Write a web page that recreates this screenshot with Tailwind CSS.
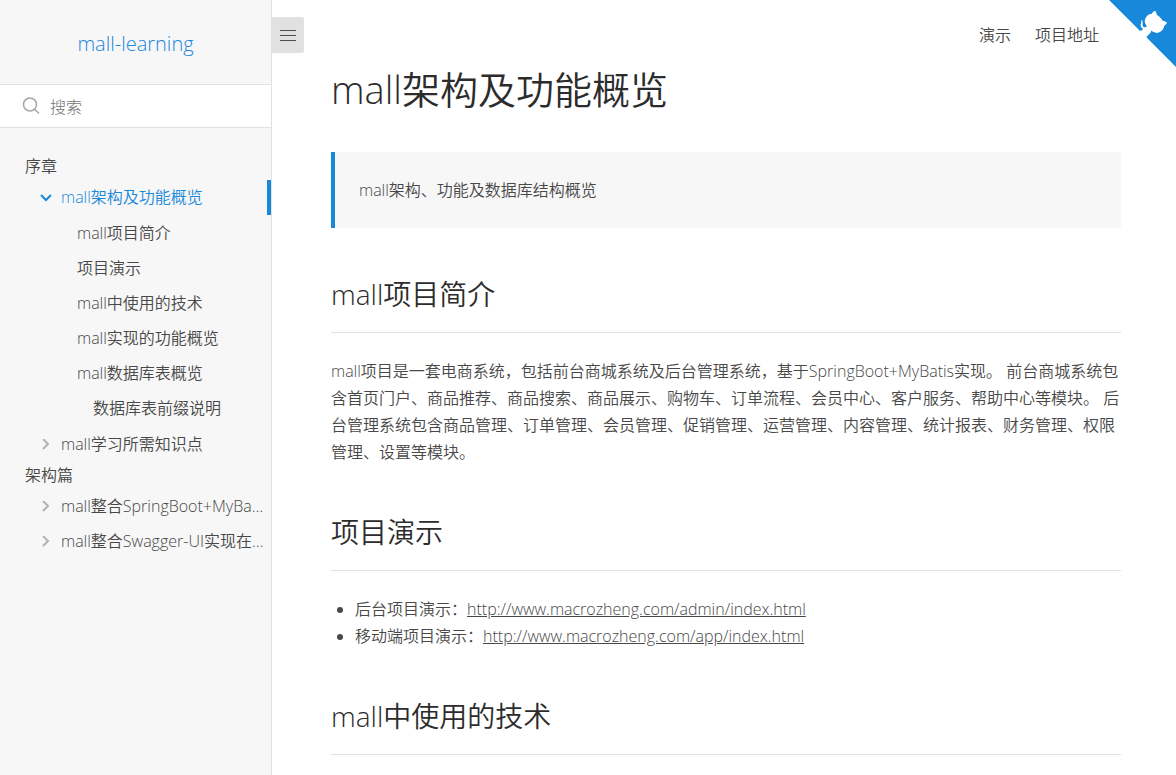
<!DOCTYPE html>
<html lang="zh-CN">
<head>
  <meta charset="UTF-8" />
  <meta name="viewport" content="width=device-width, initial-scale=1.0" />
  <title>mall架构及功能概览</title>
  <script src="https://cdn.jsdelivr.net/npm/@tailwindcss/browser@4"></script>
</head>
<body class="flex h-screen overflow-hidden bg-white font-['Open_Sans','Noto_Sans_CJK_SC',sans-serif] text-base leading-[27px] font-[350] text-[#484848]">

  <!-- Sidebar -->
  <aside class="w-[272px] shrink-0 overflow-hidden border-r border-[#e1e1e1] bg-[#f7f7f7]">
    <div class="flex h-[84px] items-center justify-center pt-1">
      <a href="#/" class="text-xl font-light text-[#1888db]">mall-learning</a>
    </div>

    <form class="flex h-11 items-center border-y border-[#e1e1e1] bg-white pl-[22px]">
      <label for="search" aria-label="搜索">
        <svg class="size-[18px]" viewBox="0 0 18 18" fill="none" stroke="#a6a6a6" stroke-width="1.5">
          <circle cx="8" cy="7.500" r="6.500" />
          <path d="M12.500 12l4.500 4.500" />
        </svg>
      </label>
      <input id="search" type="search" placeholder="搜索" class="ml-[10px] w-48 pt-0.5 font-light outline-none placeholder:text-[#757575]" />
    </form>

    <nav class="pt-[25px] pl-[25px]">
      <p>序章</p>
      <ul>
        <li>
          <div class="flex h-[35px] items-center border-r-4 border-[#1888db] pl-[15px] text-[#1888db]">
            <svg class="mr-[9px] size-3 shrink-0" viewBox="0 0 12 12" fill="none" stroke="currentColor" stroke-width="2"><path d="M1 3l5 5 5-5" /></svg>
            <a href="#/overview" class="truncate">mall架构及功能概览</a>
          </div>
          <ul class="py-px pl-[52px]">
            <li class="leading-[35px]"><a href="#/overview?id=intro">mall项目简介</a></li>
            <li class="leading-[35px]"><a href="#/overview?id=demo">项目演示</a></li>
            <li class="leading-[35px]"><a href="#/overview?id=tech">mall中使用的技术</a></li>
            <li class="leading-[35px]"><a href="#/overview?id=features">mall实现的功能概览</a></li>
            <li class="leading-[35px]">
              <a href="#/overview?id=tables">mall数据库表概览</a>
              <ul class="pl-4">
                <li><a href="#/overview?id=prefix">数据库表前缀说明</a></li>
              </ul>
            </li>
          </ul>
        </li>
        <li class="flex h-[35px] items-center pl-[15px]">
          <svg class="mr-[9px] size-3 shrink-0" viewBox="0 0 12 12" fill="none" stroke="#b3b3b3" stroke-width="2"><path d="M3 0l5 5-5 5" /></svg>
          <a href="#/reference" class="truncate">mall学习所需知识点</a>
        </li>
      </ul>
      <p>架构篇</p>
      <ul class="pr-1">
        <li class="flex h-[35px] items-center pl-[15px]">
          <svg class="mr-[9px] size-3 shrink-0" viewBox="0 0 12 12" fill="none" stroke="#b3b3b3" stroke-width="2"><path d="M3 0l5 5-5 5" /></svg>
          <a href="#/arch-01" class="truncate">mall整合SpringBoot+MyBatis搭建基本骨架</a>
        </li>
        <li class="flex h-[35px] items-center pl-[15px]">
          <svg class="mr-[9px] size-3 shrink-0" viewBox="0 0 12 12" fill="none" stroke="#b3b3b3" stroke-width="2"><path d="M3 0l5 5-5 5" /></svg>
          <a href="#/arch-02" class="truncate">mall整合Swagger-UI实现在线API文档</a>
        </li>
      </ul>
    </nav>
  </aside>

  <!-- Content -->
  <main class="relative min-w-0 flex-1 overflow-hidden">
    <button type="button" aria-label="Menu" class="absolute top-[17px] left-0 flex h-9 w-8 flex-col items-center justify-center gap-1 rounded-r-xs bg-[#e1e1e1]">
      <span class="h-px w-4 bg-[#4d4d4d]"></span>
      <span class="h-px w-4 bg-[#4d4d4d]"></span>
      <span class="h-px w-4 bg-[#4d4d4d]"></span>
    </button>

    <a href="https://github.com/macrozheng/mall" aria-label="View source on Github" class="absolute top-0 right-0">
      <svg class="size-[67px]" viewBox="0 0 250 250" fill="#1888db">
        <path d="M0,0 L115,115 L130,115 L142,142 L250,250 L250,0 Z" />
        <path fill="#fff" d="M128.3,109.0 C113.8,99.7 119.0,89.6 119.0,89.6 C122.0,82.7 120.5,78.6 120.5,78.6 C119.2,72.0 123.4,76.3 123.4,76.3 C127.3,80.9 125.5,87.3 125.5,87.3 C122.9,97.6 130.6,101.9 134.4,103.2" />
        <path fill="#fff" d="M115.0,115.0 C114.9,115.1 118.7,116.5 119.8,115.4 L133.7,101.6 C136.9,99.2 139.9,98.4 142.2,98.6 C133.8,88.0 127.5,74.4 143.8,58.0 C148.5,53.4 154.0,51.2 159.7,51.0 C160.3,49.4 163.2,43.6 171.4,40.1 C171.4,40.1 176.1,42.5 178.8,56.2 C183.1,58.6 187.2,61.8 190.9,65.4 C194.5,69.0 197.7,73.2 200.1,77.6 C213.8,80.2 216.3,84.9 216.3,84.9 C212.7,93.1 206.9,96.0 205.4,96.6 C205.1,102.4 203.0,107.8 198.3,112.5 C181.9,128.9 168.3,122.5 157.7,114.1 C157.9,116.9 156.7,120.9 152.7,124.9 L141.0,136.5 C139.8,137.7 141.6,141.9 141.8,141.8 Z" />
      </svg>
    </a>

    <nav class="flex justify-end gap-6 pt-[22px] pr-[77px] pb-4">
      <a href="#demo">演示</a>
      <a href="#source">项目地址</a>
    </nav>

    <article class="pr-[55px] pl-[59px]">
      <h1 class="mb-[39px] text-[38px] leading-[48px] text-[#2c2c2c]">mall架构及功能概览</h1>

      <blockquote class="border-l-4 border-[#1888db] bg-[#f7f7f7] px-6 pt-[25px] pb-6">
        <p>mall架构、功能及数据库结构概览</p>
      </blockquote>

      <h2 class="mt-11 mb-[25px] border-b border-[#e1e1e1] pb-4 text-[28px] leading-[44px] text-[#2c2c2c]">mall项目简介</h2>
      <p>mall项目是一套电商系统，包括前台商城系统及后台管理系统，基于SpringBoot+MyBatis实现。 前台商城系统包含首页门户、商品推荐、商品搜索、商品展示、购物车、订单流程、会员中心、客户服务、帮助中心等模块。 后台管理系统包含商品管理、订单管理、会员管理、促销管理、运营管理、内容管理、统计报表、财务管理、权限管理、设置等模块。</p>

      <h2 class="mt-11 mb-[25px] border-b border-[#e1e1e1] pb-4 text-[28px] leading-[44px] text-[#2c2c2c]">项目演示</h2>
      <ul class="list-disc pl-6">
        <li>后台项目演示：<a href="http://www.macrozheng.com/admin/index.html" class="underline">http://www.macrozheng.com/admin/index.html</a></li>
        <li>移动端项目演示：<a href="http://www.macrozheng.com/app/index.html" class="underline">http://www.macrozheng.com/app/index.html</a></li>
      </ul>

      <h2 class="mt-11 mb-[25px] border-b border-[#e1e1e1] pb-4 text-[28px] leading-[44px] text-[#2c2c2c]">mall中使用的技术</h2>
    </article>
  </main>

</body>
</html>
